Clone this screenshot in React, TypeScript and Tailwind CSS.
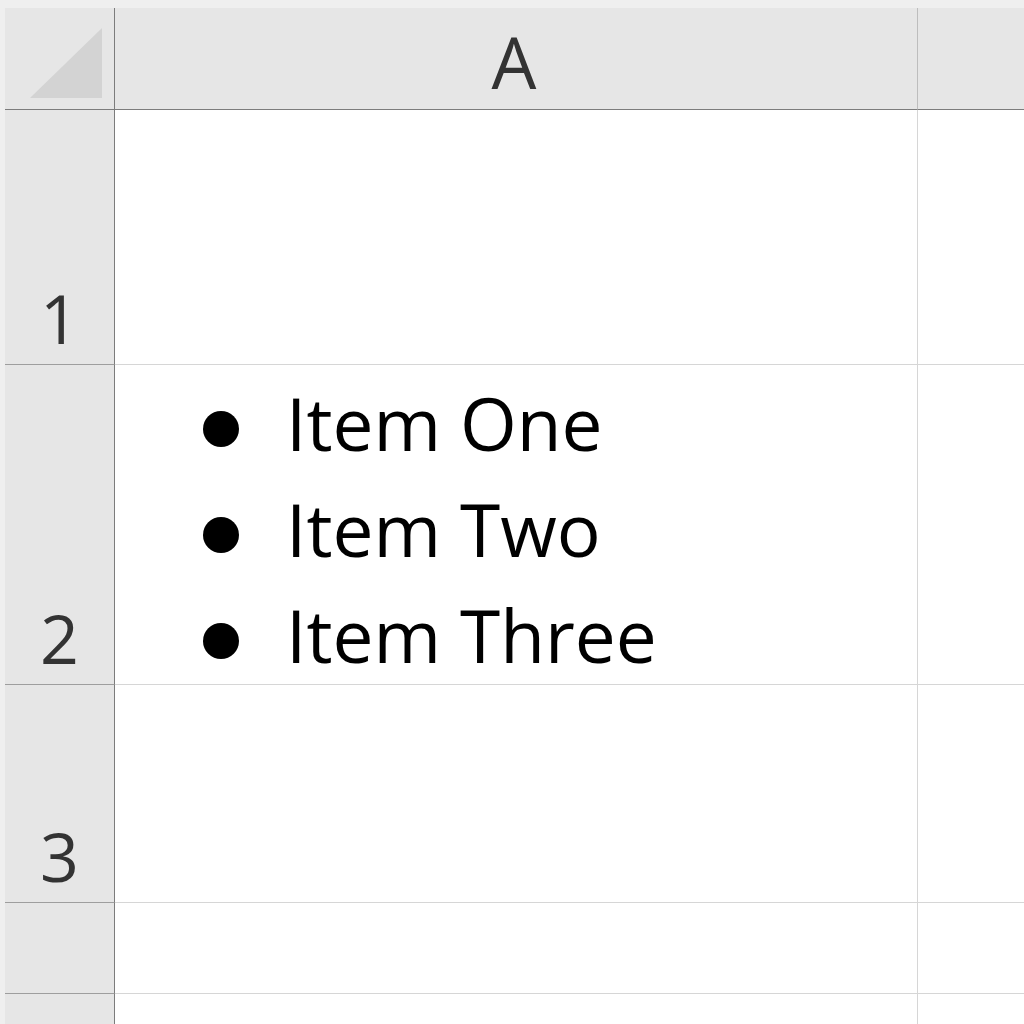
const font = { fontFamily: '"Open Sans", "Noto Sans", sans-serif' };

const rows: { label: string; height: string; items?: string[] }[] = [
  { label: '1', height: 'h-[255px]' },
  { label: '2', height: 'h-[320px]', items: ['Item One', 'Item Two', 'Item Three'] },
  { label: '3', height: 'h-[218px]' },
  { label: '', height: 'h-[91px]' },
  { label: '', height: 'h-[60px]' },
];

const RowLabel = (props: { label: string; height: string }) => (
  <div
    className={`${props.height} border-r border-r-[#7c7c7c] border-b border-b-[#9e9e9e] bg-[#e6e6e6] flex items-end justify-center pb-[12px] text-[68px] leading-none text-[#333333]`}
  >
    {props.label}
  </div>
);

export default function App() {
  return (
    <div className="w-[1024px] h-[1024px] overflow-hidden bg-[#efefef] pt-[8px] pl-[5px]" style={font}>
      <div className="grid grid-cols-[110px_803px_1fr]">
        {/* header */}
        <div className="h-[102px] bg-[#e6e6e6] border-r border-r-[#7c7c7c] border-b border-b-[#7c7c7c] relative">
          <svg className="absolute left-0 top-0" width="109" height="101" viewBox="0 0 109 101">
            <polygon points="25,90 97,90 97,20" fill="#d3d3d3" />
          </svg>
        </div>
        <div className="h-[102px] bg-[#e6e6e6] border-r border-r-[#bdbdbd] border-b border-b-[#7c7c7c] flex items-end justify-center pb-[12px] pr-[4px] text-[71px] leading-none text-[#333333]">
          A
        </div>
        <div className="h-[102px] bg-[#e6e6e6] border-b border-b-[#7c7c7c]" />

        {rows.map((row, i) => (
          <div key={i} className="contents">
            <RowLabel label={row.label} height={row.height} />
            <div className={`${row.height} bg-white border-r border-r-[#d6d6d6] border-b border-b-[#d6d6d6]`}>
              {row.items && (
                <ul className="pt-[5px] pl-[88px]">
                  {row.items.map(item => (
                    <li key={item} className="flex items-center h-[106px] text-[73px] leading-[106px] text-black">
                      <span className="w-[36px] h-[36px] rounded-full bg-black shrink-0 mr-[47px] mt-[12px]" />
                      {item}
                    </li>
                  ))}
                </ul>
              )}
            </div>
            <div className={`${row.height} bg-white border-b border-b-[#d6d6d6]`} />
          </div>
        ))}
      </div>
    </div>
  );
}
